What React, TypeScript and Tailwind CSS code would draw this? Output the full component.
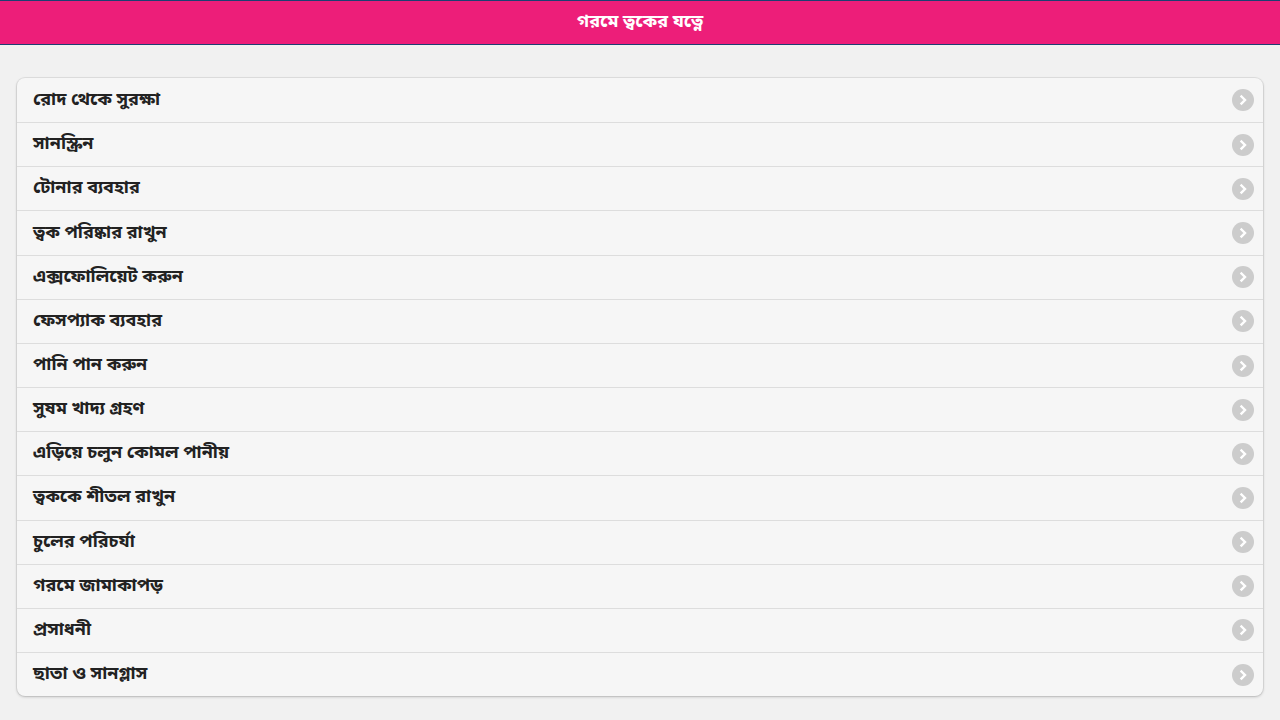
const ITEMS = [
  "রোদ থেকে সুরক্ষা",
  "সানস্ক্রিন",
  "টোনার ব্যবহার",
  "ত্বক পরিষ্কার রাখুন",
  "এক্সফোলিয়েট করুন",
  "ফেসপ্যাক ব্যবহার",
  "পানি পান করুন",
  "সুষম খাদ্য গ্রহণ",
  "এড়িয়ে চলুন কোমল পানীয়",
  "ত্বককে শীতল রাখুন",
  "চুলের পরিচর্যা",
  "গরমে জামাকাপড়",
  "প্রসাধনী",
  "ছাতা ও সানগ্লাস",
];

function Chevron() {
  return (
    <span className="flex h-[22px] w-[22px] items-center justify-center rounded-full bg-[#cccccc]">
      <svg width="12" height="12" viewBox="0 0 12 12" fill="none">
        <path d="M4.5 2.5 L8 6 L4.5 9.5" stroke="#fff" strokeWidth="2.4" strokeLinecap="square" />
      </svg>
    </span>
  );
}

export default function App() {
  return (
    <div
      className="min-h-[720px] bg-[#f1f1f1]"
      style={{ fontFamily: '"Noto Sans Bengali", "Noto Sans", "DejaVu Sans", sans-serif' }}
    >
      <header className="flex h-[45px] items-center justify-center border-y border-[#1d3f72] bg-[#ed1e79] text-[18px] font-bold text-white">
        গরমে ত্বকের যত্নে
      </header>
      <div className="px-[17px] pt-[33px]">
        <ul className="overflow-hidden rounded-[8px] bg-[#f6f6f6] shadow-[0_1px_3px_rgba(0,0,0,0.2),0_0_0_1px_rgba(0,0,0,0.06)]">
          {ITEMS.map((t, i) => (
            <li
              key={t}
              className={`flex h-[44.17px] items-center justify-between pl-4 pr-[9px] text-[18px] font-bold text-[#222] ${
                i > 0 ? "border-t border-[#dddddd]" : ""
              }`}
            >
              <span>{t}</span>
              <Chevron />
            </li>
          ))}
        </ul>
      </div>
    </div>
  );
}
